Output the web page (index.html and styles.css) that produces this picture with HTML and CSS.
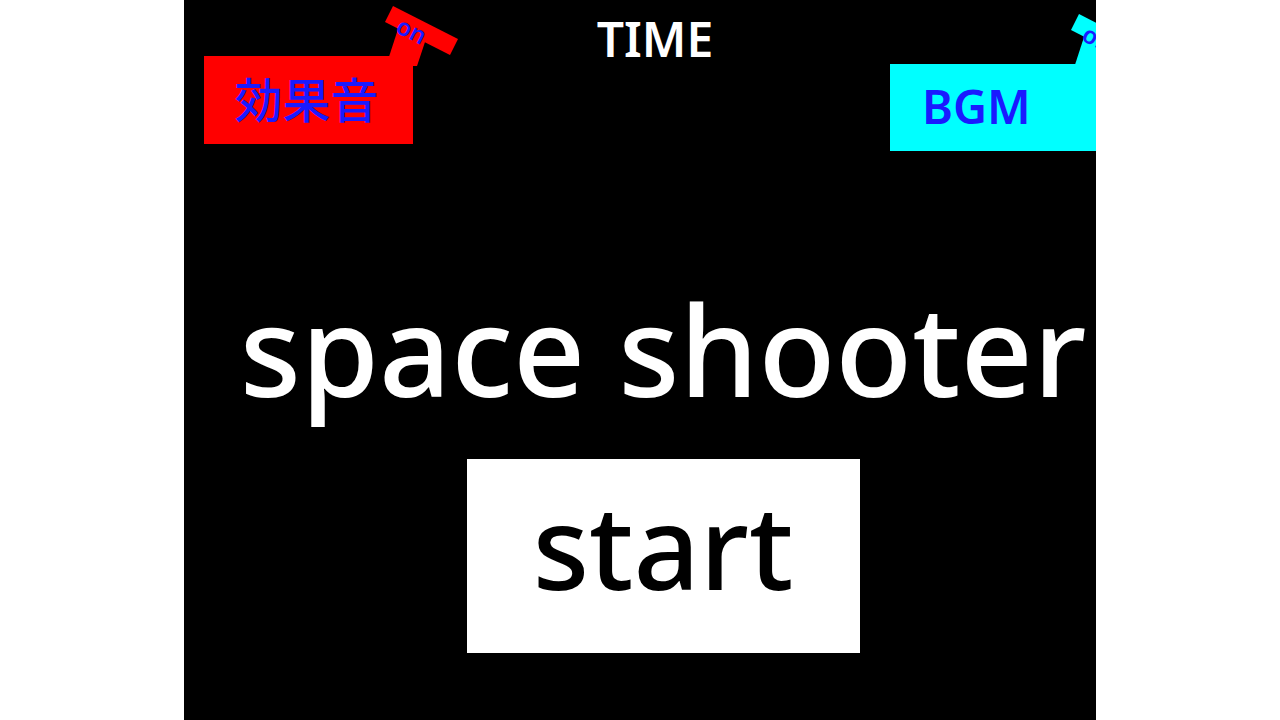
FILE: index.html
```html
<!DOCTYPE html>
<html lang="ja">
<head>
<meta charset="utf-8">
<title>space shooter</title>
<link rel="stylesheet" href="styles.css">
</head>
<body>
<div class="stage">
  <div class="sprite sfx">
    <svg class="tab" viewBox="0 0 85 65" width="85" height="65">
      <polygon class="tab-fill" points="14,5 79,38 71,54 6,21"/>
      <polygon class="tab-fill" points="20,25 47,38 38,65 7,65"/>
      <text class="tab-text" x="33" y="29" transform="rotate(27 33 29)" text-anchor="middle" dominant-baseline="central">on</text>
    </svg>
    <div class="box red">効果音</div>
  </div>
  <div class="time">TIME</div>
  <div class="sprite bgm">
    <svg class="tab" viewBox="0 0 85 65" width="85" height="65">
      <polygon class="tab-fill" points="14,5 79,38 71,54 6,21"/>
      <polygon class="tab-fill" points="20,25 47,38 38,65 7,65"/>
      <text class="tab-text" x="33" y="29" transform="rotate(27 33 29)" text-anchor="middle" dominant-baseline="central">on</text>
    </svg>
    <div class="box cyan">BGM</div>
  </div>
  <main class="menu">
    <h1 class="title">space shooter</h1>
    <button class="start">start</button>
  </main>
</div>
</body>
</html>
```
FILE: styles.css
```css
html, body {
  margin: 0;
  padding: 0;
  background: #ffffff;
}
body {
  font-family: "Noto Sans", "Open Sans", "Noto Sans CJK JP", sans-serif;
}
.stage {
  position: relative;
  width: 912px;
  height: 720px;
  margin-left: 184px;
  background: #000000;
  overflow: hidden;
}
.sprite {
  position: absolute;
  width: 209px;
}
.sfx {
  left: 20px;
  top: 56px;
}
.bgm {
  left: 706px;
  top: 64px;
}
.tab {
  position: absolute;
  left: 175px;
  top: -55px;
  z-index: 0;
}
.sfx .tab-fill { fill: #ff0000; }
.bgm .tab-fill { fill: #00ffff; }
.tab-text {
  fill: #1a1aff;
  font-family: "Noto Sans", sans-serif;
  font-weight: 600;
  font-size: 24px;
}
.box {
  position: relative;
  z-index: 1;
  height: 88px;
  display: flex;
  align-items: center;
  color: #1a1aff;
  box-sizing: border-box;
}
.red {
  background: #ff0000;
  justify-content: center;
  padding-right: 4px;
  padding-bottom: 6px;
  font-family: "Noto Sans CJK JP", sans-serif;
  font-size: 48px;
  font-weight: 500;
}
.cyan {
  height: 87px;
  background: #00ffff;
  padding-left: 32px;
  padding-bottom: 4px;
  font-family: "Noto Sans", sans-serif;
  font-size: 47px;
  font-weight: 600;
}
.time {
  position: absolute;
  left: 471px;
  top: 6px;
  transform: translateX(-50%);
  color: #ffffff;
  font-size: 48px;
  font-weight: 600;
  line-height: normal;
}
.menu {
  display: flex;
  flex-direction: column;
  align-items: center;
  padding-top: 262px;
  padding-left: 46px;
  gap: 25px;
}
.title {
  margin: 0;
  color: #ffffff;
  font-size: 126px;
  font-weight: 500;
  line-height: normal;
  white-space: nowrap;
}
.start {
  width: 393px;
  height: 194px;
  margin: 0;
  padding: 7px 0 0 0;
  border: none;
  background: #ffffff;
  color: #000000;
  font-family: "Noto Sans", sans-serif;
  font-size: 116px;
  font-weight: 500;
  line-height: normal;
  display: flex;
  justify-content: center;
  align-items: flex-start;
  box-sizing: border-box;
}
```
